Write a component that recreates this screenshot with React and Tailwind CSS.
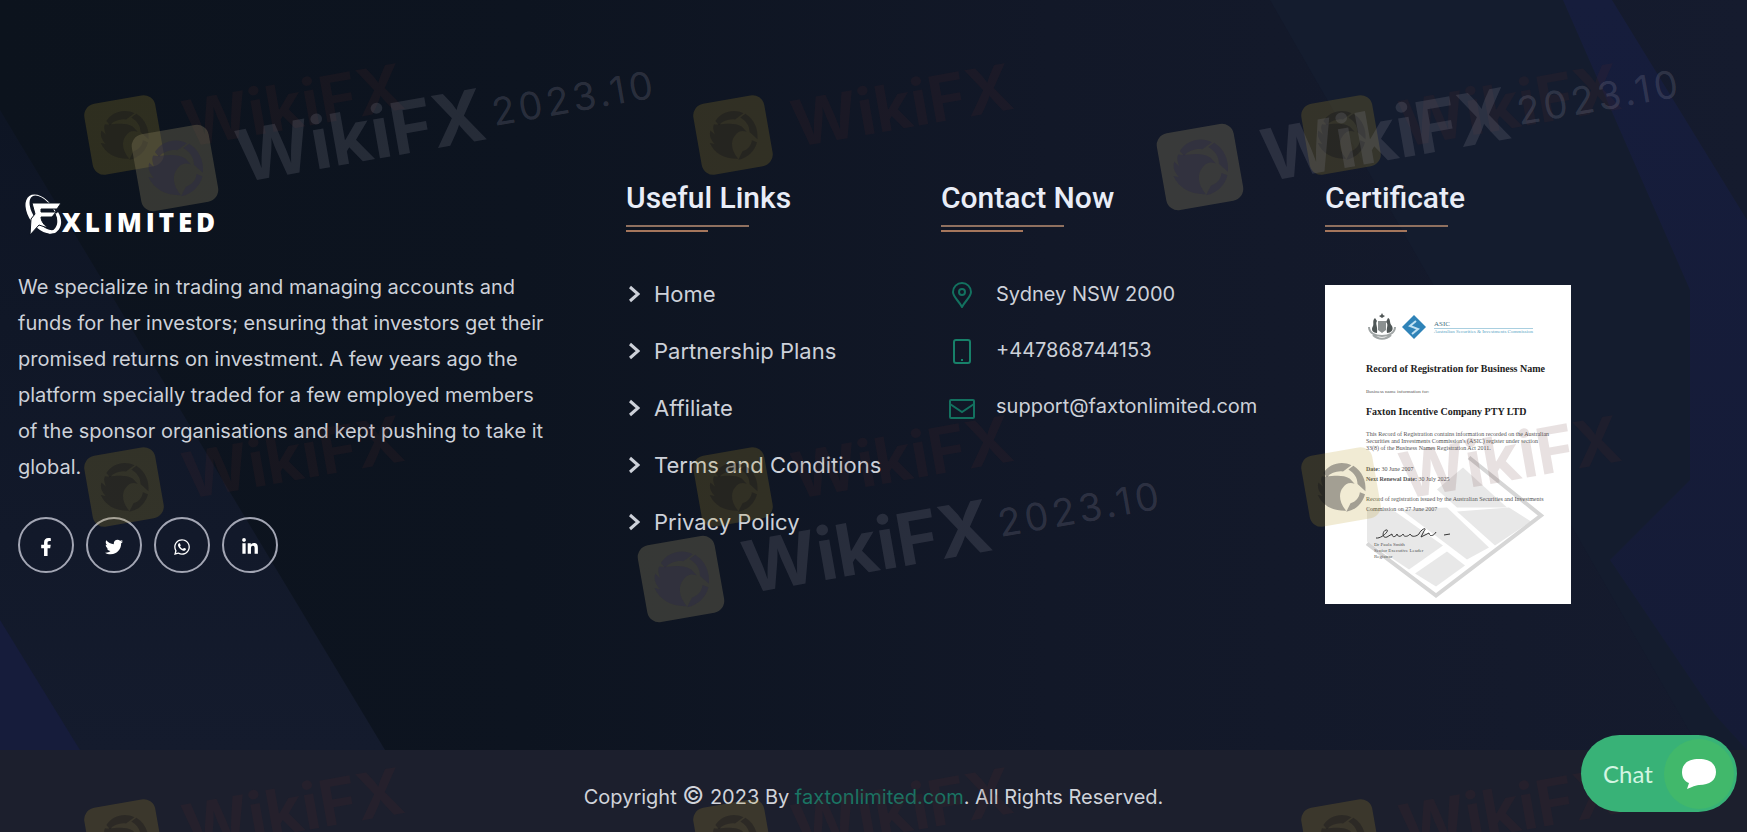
import { FaFacebookF, FaTwitter, FaWhatsapp, FaLinkedinIn } from "react-icons/fa";

const socials = [
  { name: "Facebook", icon: FaFacebookF },
  { name: "Twitter", icon: FaTwitter },
  { name: "WhatsApp", icon: FaWhatsapp },
  { name: "LinkedIn", icon: FaLinkedinIn },
];

const links = ["Home", "Partnership Plans", "Affiliate", "Terms and Conditions", "Privacy Policy"];

const yellowMarks = [
  "left-[88px] top-[99px]",
  "left-[697px] top-[99px]",
  "left-[1305px] top-[99px]",
  "left-[88px] top-[451px]",
  "left-[697px] top-[451px]",
  "left-[1305px] top-[451px]",
  "left-[88px] top-[803px]",
  "left-[697px] top-[803px]",
  "left-[1305px] top-[803px]",
];

const greyMarks = ["left-[136px] top-[129px]", "left-[1161px] top-[128px]", "left-[642px] top-[540px]"];

function Backdrop() {
  return (
    <svg
      className="absolute inset-0 h-full w-full"
      viewBox="0 0 1747 832"
      preserveAspectRatio="none"
      aria-hidden="true"
    >
      <defs>
        <linearGradient id="base" x1="0" y1="0" x2="1" y2="0">
          <stop offset="0" stopColor="#0c131d" />
          <stop offset="0.3" stopColor="#0d1420" />
          <stop offset="0.6" stopColor="#121828" />
          <stop offset="1" stopColor="#151b2e" />
        </linearGradient>
        <linearGradient id="leftBand" x1="0" y1="0" x2="0" y2="1">
          <stop offset="0" stopColor="#0e1524" />
          <stop offset="1" stopColor="#141b2d" />
        </linearGradient>
        <linearGradient id="rightBand" x1="0" y1="0" x2="0" y2="1">
          <stop offset="0" stopColor="#161d3c" />
          <stop offset="1" stopColor="#151b36" />
        </linearGradient>
      </defs>
      <rect width="1747" height="832" fill="url(#base)" />
      <polygon points="0,110 385,750 0,750" fill="url(#leftBand)" />
      <polygon points="0,620 80,750 0,750" fill="#161c3b" />
      <polygon points="1270,0 1575,0 1747,330 1747,750 1700,750" fill="#141c2e" />
      <polygon points="1563,0 1612,0 1747,220 1747,750 1715,715 1610,560 1690,480 1690,290" fill="url(#rightBand)" />
    </svg>
  );
}

function Eagle({ className }) {
  return (
    <svg viewBox="0 0 60 60" className={className} fill="currentColor" aria-hidden="true">
      <path d="M14 12C22 3 36 2 45 9L35 14C29 12 22 13 17 17Z" />
      <path d="M47 10C55 17 58 28 55 39L48 30C49 24 47 18 41 13Z" />
      <path d="M54 42C50 51 41 57 31 57L37 49C43 48 47 45 49 39Z" />
      <path d="M12 15C20 18 32 15 41 23L45 29C39 26 35 28 32 31C26 36 25 46 31 56C17 54 7 46 4 34L9 36C5 30 5 25 7 21L11 26C10 21 10 17 12 15Z" />
    </svg>
  );
}

function YellowMark({ place }) {
  return (
    <div aria-hidden="true" className={`absolute flex -rotate-10 items-center origin-[36px_36px] gap-6 ${place}`}>
      <div className="flex h-[72px] w-[72px] items-center justify-center rounded-xl bg-[#b89a28]/20">
        <Eagle className="h-14 w-14 text-[#12101a]/35" />
      </div>
      <span className="text-[64px] leading-none font-bold text-[#5c2a2a]/14">WikiFX</span>
    </div>
  );
}

function GreyMark({ place }) {
  return (
    <div aria-hidden="true" className={`absolute flex -rotate-10 items-center origin-[39px_39px] gap-6 ${place}`}>
      <div className="flex h-[78px] w-[78px] items-center justify-center rounded-xl bg-[#8c8460]/32">
        <Eagle className="h-16 w-16 text-[#2c2a44]/50" />
      </div>
      <span className="text-7xl leading-none font-bold text-[#8a8a9c]/20">WikiFX</span>
      <span className="-ml-4 text-[38px] leading-none tracking-widest text-[#8a8a9c]/24">2023.10</span>
    </div>
  );
}

function Heading({ children }) {
  return (
    <div>
      <h2 className="font-[Roboto,sans-serif] text-3xl leading-9 font-medium text-[#e9edf7]">{children}</h2>
      <div className="mt-[9px] h-[2px] w-[123px] bg-[#8f705f]" />
      <div className="mt-[3px] h-[2px] w-[82px] bg-[#a5765c]" />
    </div>
  );
}

function Logo() {
  return (
    <a href="#home" aria-label="FXLimited" className="ml-[6px] flex items-end">
      <svg viewBox="0 0 38 44" className="h-11 w-[38px]" aria-hidden="true">
        <path
          transform="rotate(-35 18 22)"
          fill="#fff"
          fillRule="evenodd"
          d="M18 0A13 22 0 0 1 18 44A13 22 0 0 1 18 0ZM20 2A10 20 0 0 0 20 42A10 20 0 0 0 20 2Z"
        />
        <path
          d="M8 11H37L33 17H17V20H32L28 25H17C17 29 20 33 24 36L15 33L6 43L7 27L11 22Z"
          fill="#fff"
          stroke="#0d1420"
        />
        <path d="M34 20C39 28 38 37 31 41L24 42C34 37 35 29 32 22Z" fill="#fff" />
      </svg>
      <span className="font-[Open_Sans,sans-serif] text-[26px] leading-7 font-extrabold tracking-[0.15em] text-white">
        XLIMITED
      </span>
    </a>
  );
}

function Certificate() {
  return (
    <div className="relative mt-[53px] h-[319px] w-[246px] bg-white pt-7 pl-[41px] font-['Liberation_Serif',serif] text-[#555]">
      <svg viewBox="0 0 246 318" className="absolute inset-0 h-full w-full" aria-hidden="true">
        <g fill="#e8e8e8">
          <polygon points="138,182 182,222 132,222 112,204" />
          <polygon points="76,224 122,222 164,262 142,274" />
          <polygon points="42,222 70,226 118,260 84,284 42,256" />
          <polygon points="132,226 184,222 206,236 170,260" />
          <polygon points="90,288 122,266 140,280 111,301" />
        </g>
        <path d="M42 258L111 310L216 230L144 172" fill="none" stroke="#d6d6d6" strokeWidth="4" />
      </svg>
      <div className="relative">
        <div className="flex items-center gap-1">
          <svg viewBox="0 0 32 28" className="h-7 w-8" fill="#4f5656" aria-hidden="true">
            <path d="M15 2L16 0L17 2L19 3L16 5L13 3Z" />
            <path d="M12 8H20V17L16 20L12 17Z" fill="#8b9090" />
            <path d="M11 20C6 20 5 16 7 13C8 10 6 8 9 5L11 8C9 11 12 13 11 20Z" />
            <path d="M21 20C25 20 28 17 26 13C23 10 25 6 22 5L20 9C23 12 20 14 21 20Z" />
            <path d="M3 14C3 20 9 23 16 23S29 20 29 14M7 22C12 27 20 27 25 22" fill="none" stroke="#a0a5a5" strokeWidth="2" />
          </svg>
          <svg viewBox="0 0 24 24" className="h-6 w-6" aria-hidden="true">
            <path d="M12 0L24 12L12 24L0 12Z" fill="#2f83b8" />
            <path d="M14 6L8 11L16 14L10 19" fill="none" stroke="#bfe0f2" strokeWidth="2" />
          </svg>
          <div className="ml-1 whitespace-nowrap text-[#5aa5c5]">
            <p className="text-[7px] leading-[7px] text-[#44707f]">ASIC</p>
            <p className="border-t border-[#a9cfe0] text-[5px] leading-[5px]">Australian Securities &amp; Investments Commission</p>
          </div>
        </div>
        <p className="mt-[21px] text-[10px] leading-[14px] font-bold whitespace-nowrap text-[#222]">
          Record of Registration for Business Name
        </p>
        <p className="mt-[13px] text-[5px] leading-[6px]">Business name information for:</p>
        <p className="mt-[10px] text-[10px] leading-[14px] font-bold whitespace-nowrap text-[#222]">
          Faxton Incentive Company PTY LTD
        </p>
        <p className="mt-3 text-[6px] leading-[7px] whitespace-nowrap">
          This Record of Registration contains information recorded on the Australian
          <br />
          Securities and Investments Commission's (ASIC) register under section
          <br />
          33(8) of the Business Names Registration Act 2011.
        </p>
        <p className="mt-3 text-[6px] leading-[10px]">
          <b>Date:</b> 30 June 2007
          <br />
          <b>Next Renewal Date:</b> 30 July 2025
        </p>
        <p className="mt-[10px] text-[6px] leading-[10px] whitespace-nowrap">
          Record of registration issued by the Australian Securities and Investments
          <br />
          Commission on 27 June 2007
        </p>
        <svg viewBox="0 0 80 16" className="mt-3 ml-2 h-4 w-20" fill="none" stroke="#333" aria-hidden="true">
          <path d="M2 12C8 13 17 3 12 4C8 5 8 13 13 11L18 8C18 12 22 11 23 8C24 12 28 10 29 8C30 12 35 10 36 8C38 12 43 10 45 8C46 4 54 0 50 5L47 11L55 7C55 11 60 10 62 6M70 9L76 8" />
        </svg>
        <p className="ml-2 text-[5px] leading-[6px]">
          Dr Paula Smith
          <br />
          Senior Executive Leader
          <br />
          Registrar
        </p>
      </div>
    </div>
  );
}

export default function App() {
  return (
    <footer className="relative flex min-h-screen flex-col overflow-hidden bg-[#0d1420] font-[Inter,sans-serif] text-xl text-[#cdd1d9]">
      <Backdrop />

      <div className="relative grid flex-1 grid-cols-[608fr_315fr_384fr_422fr] pt-[180px] pl-[18px]">
        {/* About */}
        <div>
          <div className="pt-3">
            <Logo />
          </div>
          <p className="mt-[33px] max-w-[536px] leading-9">
            We specialize in trading and managing accounts and funds for her investors; ensuring that investors get
            their promised returns on investment. A few years ago the platform specially traded for a few employed
            members of the sponsor organisations and kept pushing to take it global.
          </p>
          <div className="mt-8 flex gap-3">
            {socials.map(({ name, icon: Icon }) => (
              <a
                key={name}
                href={`#${name}`}
                aria-label={name}
                className="flex h-14 w-14 items-center justify-center rounded-full border-2 border-[#a3a6b4] pt-1 text-white"
              >
                <Icon className="h-[18px] w-[18px]" />
              </a>
            ))}
          </div>
        </div>

        {/* Useful links */}
        <div>
          <Heading>Useful Links</Heading>
          <ul className="mt-12 flex flex-col gap-[29px] text-[22px]">
            {links.map((link) => (
              <li key={link}>
                <a href="#links" className="flex items-center gap-[14px] pl-[2px] leading-7 whitespace-nowrap">
                  <svg viewBox="0 0 12 18" className="h-[18px] w-3" fill="none" stroke="currentColor" strokeWidth="3" aria-hidden="true">
                    <path d="M2 2L10 9L2 16" />
                  </svg>
                  {link}
                </a>
              </li>
            ))}
          </ul>
        </div>

        {/* Contact */}
        <div>
          <Heading>Contact Now</Heading>
          <ul className="mt-12 ml-2 flex flex-col gap-7 leading-7">
            <li className="flex items-center gap-[21px]">
              <svg viewBox="0 0 26 28" className="h-7 w-[26px]" fill="none" stroke="#13715f" strokeWidth="2" aria-hidden="true">
                <path d="M13 27C10 21 4 17 4 12A9 9 0 0 1 22 12C22 17 16 21 13 27Z" />
                <circle cx="13" cy="12" r="3" />
              </svg>
              Sydney NSW 2000
            </li>
            <li className="flex items-center gap-[21px]">
              <svg viewBox="0 0 26 28" className="h-7 w-[26px]" fill="none" stroke="#178069" strokeWidth="2" aria-hidden="true">
                <rect x="5" y="4" width="16" height="23" rx="2" />
                <path d="M12 24H14" />
              </svg>
              +447868744153
            </li>
            <li className="flex items-center gap-[21px]">
              <svg viewBox="0 0 26 28" className="h-7 w-[26px]" fill="none" stroke="#13715f" strokeWidth="2" aria-hidden="true">
                <rect x="1" y="8" width="24" height="18" rx="1" />
                <path d="M1 12L13 20L25 12" />
              </svg>
              <a href="mailto:support@faxtonlimited.com">support@faxtonlimited.com</a>
            </li>
          </ul>
        </div>

        {/* Certificate */}
        <div>
          <Heading>Certificate</Heading>
          <Certificate />
        </div>
      </div>

      <div className="relative bg-[#1c1f2d] pt-[33px] pb-[21px] text-center leading-7 text-[#d0d3da]">
        Copyright <span className="text-2xl leading-none">©</span> 2023 By{" "}
        <a href="#top" className="text-[#1a7564]">
          faxtonlimited.com
        </a>
        . All Rights Reserved.
      </div>

      <div className="pointer-events-none absolute inset-0 overflow-hidden">
        {yellowMarks.map((place) => (
          <YellowMark key={place} place={place} />
        ))}
        {greyMarks.map((place) => (
          <GreyMark key={place} place={place} />
        ))}
      </div>

      <button
        type="button"
        className="absolute right-[10px] bottom-5 flex h-[77px] w-[156px] items-center justify-between rounded-full bg-[#38b277] pr-[3px] pl-[22px] font-[Lato,sans-serif] text-2xl text-[#d3f5e2]"
      >
        Chat
        <span className="flex h-[70px] w-[70px] items-center justify-center rounded-full bg-[#41b86b]">
          <svg viewBox="0 0 34 30" className="h-[30px] w-[34px]" fill="#fff" aria-hidden="true">
            <path d="M17 0C28 0 34 5 34 13S28 26 17 26C15 26 12 27 10 28L5 30L7 24C2 22 0 18 0 13C0 5 6 0 17 0Z" />
          </svg>
        </span>
      </button>
    </footer>
  );
}
